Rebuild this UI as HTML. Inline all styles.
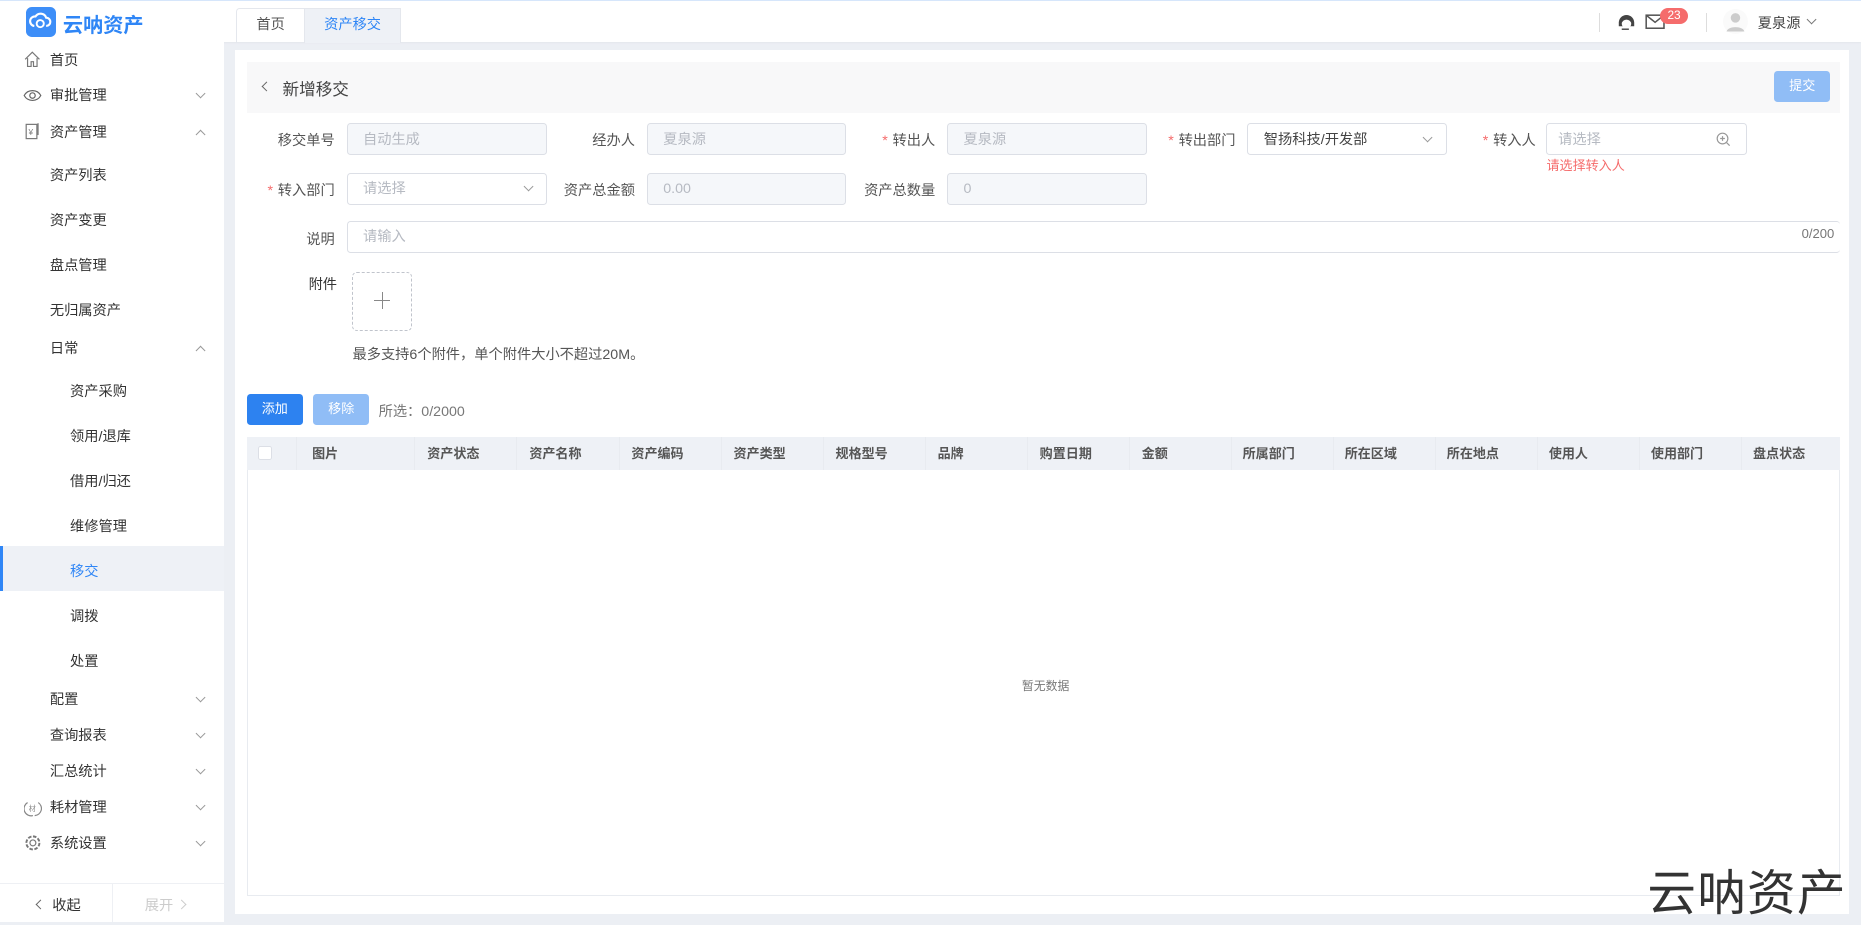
<!DOCTYPE html><html><head><meta charset="utf-8"><style>
*{margin:0;padding:0;box-sizing:border-box}
html,body{width:1861px;height:922px;overflow:hidden;background:#eceff4}
body{font-family:"Liberation Sans","Noto Sans CJK SC",sans-serif;font-size:12px;color:#333}
#w{position:absolute;left:0;top:0;width:1568px;height:777px;zoom:1.18686;background:#eceff4}
.a{position:absolute}
.hd{left:0;top:0;width:1568px;height:35px;background:#fff;border-top:1px solid #d6e6fb;box-shadow:0 1px 2px rgba(0,0,0,.05)}
.sb{left:0;top:35px;width:189px;height:742px;background:#fff}
.mi{position:absolute;left:42px;font-size:12px;color:#333;margin-top:-3px}
.ch{position:absolute;left:166px;width:6px;height:6px;border-right:1px solid #999;border-bottom:1px solid #999;transform:rotate(45deg);margin-top:1px}
.cu{transform:rotate(-135deg)}
.lb{position:absolute;font-size:12px;color:#555;text-align:right;width:90px;margin-top:-1px}
.lb b{color:#f56c6c;font-weight:normal;margin-right:4px}
.in{position:absolute;height:27px;border:1px solid #dcdfe6;border-radius:3px;background:#f5f7fa;color:#b6bac2;font-size:12px;padding:6px 13px;line-height:14px}
.wh{background:#fff}
.th{position:absolute;top:368px;height:28px;line-height:28px;font-size:11px;color:#555;font-weight:bold;border-right:1px solid #e8ebf0}
</style></head><body><div id="w">
<div class="a hd">
 <div class="a" style="left:22px;top:5px;width:25px;height:25px;background:#3d8ef8;border-radius:5px">
  <svg width="25" height="25" viewBox="0 0 25 25"><path d="M7 16a4 4 0 0 1 1-8 5 5 0 0 1 9 1 3.5 3.5 0 0 1 0 7" fill="none" stroke="#fff" stroke-width="1.8"/><circle cx="12" cy="14" r="3" fill="none" stroke="#fff" stroke-width="1.6"/></svg>
 </div>
 <div class="a" style="left:53px;top:7px;font-size:17px;font-weight:bold;color:#2f86f6">云呐资产</div>
 <div class="a" style="left:199px;top:6px;width:58px;height:29px;border:1px solid #e4e7ed;border-bottom:none;border-radius:3px 0 0 0;text-align:center;line-height:28px;color:#555">首页</div>
 <div class="a" style="left:257px;top:6px;width:81px;height:29px;background:#eef1f6;border:1px solid #e4e7ed;border-left:none;border-bottom:none;text-align:center;line-height:28px;color:#2f86f6">资产移交</div>
 <div class="a" style="left:1347px;top:10px;width:1px;height:16px;background:#ddd"></div>
 <svg class="a" style="left:1362px;top:9px" width="16" height="17" viewBox="0 0 16 17"><path d="M1.5 9a6.5 6.5 0 0 1 13 0v3h-13z" fill="#444"/><ellipse cx="8" cy="10" rx="4" ry="3.6" fill="#fff"/><path d="M4 14.5h6" stroke="#444" stroke-width="1.2"/></svg>
 <svg class="a" style="left:1386px;top:11px" width="18" height="13" viewBox="0 0 18 13"><rect x="1" y="1" width="15" height="11" fill="none" stroke="#555" stroke-width="1.3"/><path d="M1 1l7.5 6 7.5-6" fill="none" stroke="#555" stroke-width="1.3"/></svg>
 <div class="a" style="left:1399px;top:6px;width:23px;height:13px;border-radius:7px;background:#f56c6c;color:#fff;font-size:10px;text-align:center;line-height:13px">23</div>
 <div class="a" style="left:1437px;top:10px;width:1px;height:16px;background:#ddd"></div>
 <svg class="a" style="left:1452px;top:7px" width="21" height="21" viewBox="0 0 21 21"><circle cx="10.5" cy="10.5" r="10.5" fill="#fafafa"/><circle cx="10.5" cy="7.5" r="4" fill="#ccc"/><path d="M3 19c1-5 14-5 15 0z" fill="#ccc"/></svg>
 <div class="a" style="left:1481px;top:9px;font-size:12px;color:#444">夏泉源</div>
 <div class="a" style="left:1523px;top:13px;width:6px;height:6px;border-right:1px solid #777;border-bottom:1px solid #777;transform:rotate(45deg)"></div>
</div>
<div class="a sb">
 <svg class="a" style="left:20px;top:8px" width="14" height="14" viewBox="0 0 14 14"><path d="M1 7L7 1l6 6M3 6v7h3V9h2v4h3V6" fill="none" stroke="#777"/></svg>
 <div class="mi" style="top:9px">首页</div>
 <svg class="a" style="left:19px;top:40px" width="16" height="11" viewBox="0 0 16 11"><path d="M1 5.5C4 0 12 0 15 5.5 12 11 4 11 1 5.5z" fill="none" stroke="#666"/><circle cx="8" cy="5.5" r="2.3" fill="none" stroke="#666"/></svg>
 <div class="mi" style="top:39px">审批管理</div><div class="ch" style="top:40px"></div>
 <svg class="a" style="left:21px;top:68px" width="13" height="15" viewBox="0 0 13 15"><rect x="1" y="2" width="9" height="12" fill="none" stroke="#777"/><path d="M11 1v10" stroke="#777"/><text x="3" y="11" font-size="7" fill="#777">¥</text></svg>
 <div class="mi" style="top:70px">资产管理</div><div class="ch cu" style="top:74px"></div>
 <div class="mi" style="top:106px">资产列表</div>
 <div class="mi" style="top:144px">资产变更</div>
 <div class="mi" style="top:182px">盘点管理</div>
 <div class="mi" style="top:220px">无归属资产</div>
 <div class="mi" style="top:252px">日常</div><div class="ch cu" style="top:256px"></div>
 <div class="mi" style="left:59px;top:288px">资产采购</div>
 <div class="mi" style="left:59px;top:326px">领用/退库</div>
 <div class="mi" style="left:59px;top:364px">借用/归还</div>
 <div class="mi" style="left:59px;top:402px">维修管理</div>
 <div class="a" style="left:0;top:425px;width:189px;height:38px;background:#eef1f6;border-left:3px solid #2f86f6"></div>
 <div class="mi" style="left:59px;top:440px;color:#2f86f6">移交</div>
 <div class="mi" style="left:59px;top:478px">调拨</div>
 <div class="mi" style="left:59px;top:516px">处置</div>
 <div class="mi" style="top:548px">配置</div><div class="ch" style="top:549px"></div>
 <div class="mi" style="top:578px">查询报表</div><div class="ch" style="top:579px"></div>
 <div class="mi" style="top:608px">汇总统计</div><div class="ch" style="top:609px"></div>
 <svg class="a" style="left:20px;top:638px" width="15" height="15" viewBox="0 0 15 15"><path d="M3 3a6 6 0 0 0 4.5 11M12 3a6 6 0 0 1-3 11" fill="none" stroke="#888"/><text x="4" y="10" font-size="6" fill="#888">材</text></svg>
 <div class="mi" style="top:639px">耗材管理</div><div class="ch" style="top:640px"></div>
 <svg class="a" style="left:20px;top:668px" width="15" height="15" viewBox="0 0 15 15"><circle cx="7.5" cy="7.5" r="5.5" fill="none" stroke="#777" stroke-dasharray="3 1.3" stroke-width="1.6"/><circle cx="7.5" cy="7.5" r="2.5" fill="none" stroke="#777"/></svg>
 <div class="mi" style="top:669px">系统设置</div><div class="ch" style="top:670px"></div>
 <div class="a" style="left:0;top:709px;width:189px;height:1px;background:#eef0f4"></div>
 <div class="a" style="left:94px;top:710px;width:1px;height:32px;background:#eef0f4"></div>
 <div class="a" style="left:31px;top:724px;width:6px;height:6px;border-left:1px solid #666;border-bottom:1px solid #666;transform:rotate(45deg)"></div>
 <div class="mi" style="left:44px;top:721px">收起</div>
 <div class="mi" style="left:122px;top:721px;color:#ccc">展开</div>
 <div class="a" style="left:150px;top:724px;width:6px;height:6px;border-right:1px solid #ccc;border-top:1px solid #ccc;transform:rotate(45deg)"></div>
</div>
<div class="a" style="left:198px;top:42px;width:1360px;height:728px;background:#fff"></div>
<div class="a" style="left:208px;top:52px;width:1342px;height:43px;background:#f8f8f9"></div>
<div class="a" style="left:222px;top:70px;width:6px;height:6px;border-left:1px solid #666;border-bottom:1px solid #666;transform:rotate(45deg)"></div>
<div class="a" style="left:238px;top:64px;font-size:14px;color:#444">新增移交</div>
<div class="a" style="left:1495px;top:60px;width:47px;height:26px;background:#90bdf6;border-radius:3px;color:#fff;text-align:center;line-height:26px;font-size:11px">提交</div>

<div class="lb" style="left:192px;top:110px">移交单号</div><div class="in" style="left:292px;top:104px;width:169px">自动生成</div>
<div class="lb" style="left:445px;top:110px">经办人</div><div class="in" style="left:545px;top:104px;width:168px">夏泉源</div>
<div class="lb" style="left:698px;top:110px"><b>*</b>转出人</div><div class="in" style="left:798px;top:104px;width:168px">夏泉源</div>
<div class="lb" style="left:951px;top:110px"><b>*</b>转出部门</div><div class="in wh" style="left:1051px;top:104px;width:168px;color:#444">智扬科技/开发部</div>
<div class="a" style="left:1200px;top:113px;width:6px;height:6px;border-right:1px solid #999;border-bottom:1px solid #999;transform:rotate(45deg)"></div>
<div class="lb" style="left:1204px;top:110px"><b>*</b>转入人</div><div class="in wh" style="left:1303px;top:104px;width:169px;padding-left:9px">请选择</div>
<svg class="a" style="left:1446px;top:111px" width="12" height="12" viewBox="0 0 12 12"><circle cx="5.5" cy="5.5" r="4.5" fill="none" stroke="#999"/><path d="M9 9l2.5 2.5M5.5 3.5v4M3.5 5.5h4" stroke="#999"/></svg>
<div class="a" style="left:1303px;top:131px;font-size:11px;color:#f56c6c">请选择转入人</div>

<div class="lb" style="left:192px;top:152px"><b>*</b>转入部门</div><div class="in wh" style="left:292px;top:146px;width:169px">请选择</div>
<div class="a" style="left:442px;top:154px;width:6px;height:6px;border-right:1px solid #999;border-bottom:1px solid #999;transform:rotate(45deg)"></div>
<div class="lb" style="left:445px;top:152px">资产总金额</div><div class="in" style="left:545px;top:146px;width:168px">0.00</div>
<div class="lb" style="left:698px;top:152px">资产总数量</div><div class="in" style="left:798px;top:146px;width:168px">0</div>

<div class="lb" style="left:192px;top:193px">说明</div><div class="in wh" style="left:292px;top:186px;width:1258px;border-right:none">请输入</div>
<div class="a" style="left:1518px;top:190px;font-size:11px;color:#777">0/200</div>

<div class="a" style="left:260px;top:230px;color:#333">附件</div>
<div class="a" style="left:297px;top:229px;width:50px;height:50px;border:1px dashed #c0c4cc;border-radius:4px"></div>
<div class="a" style="left:315px;top:253px;width:14px;height:1px;background:#888"></div>
<div class="a" style="left:322px;top:246px;width:1px;height:14px;background:#888"></div>
<div class="a" style="left:297px;top:289px;color:#555">最多支持6个附件，单个附件大小不超过20M。</div>

<div class="a" style="left:208px;top:332px;width:47px;height:26px;background:#2d82f0;border-radius:3px;color:#fff;text-align:center;line-height:26px;font-size:11px">添加</div>
<div class="a" style="left:264px;top:332px;width:47px;height:26px;background:#90bdf6;border-radius:3px;color:#fff;text-align:center;line-height:26px;font-size:11px">移除</div>
<div class="a" style="left:319px;top:337px;color:#777">所选：0/2000</div>

<div class="a" style="left:208px;top:368px;width:1342px;height:387px;border:1px solid #e8ebf0"></div>
<div class="a" style="left:208px;top:368px;width:1342px;height:28px;background:#eef1f6"></div>
<div class="a" style="left:217px;top:376px;width:12px;height:12px;border:1px solid #dcdfe6;background:#fff;border-radius:2px"></div>
<div class="th" style="left:208px;width:42px"></div>
<div class="th" style="left:250px;width:100px;padding-left:13px">图片</div>
<div class="th" style="left:350px;width:86px;padding-left:10px">资产状态</div>
<div class="th" style="left:436px;width:86px;padding-left:10px">资产名称</div>
<div class="th" style="left:522px;width:86px;padding-left:10px">资产编码</div>
<div class="th" style="left:608px;width:86px;padding-left:10px">资产类型</div>
<div class="th" style="left:694px;width:86px;padding-left:10px">规格型号</div>
<div class="th" style="left:780px;width:86px;padding-left:10px">品牌</div>
<div class="th" style="left:866px;width:86px;padding-left:10px">购置日期</div>
<div class="th" style="left:952px;width:86px;padding-left:10px">金额</div>
<div class="th" style="left:1038px;width:86px;padding-left:9px">所属部门</div>
<div class="th" style="left:1124px;width:86px;padding-left:9px">所在区域</div>
<div class="th" style="left:1210px;width:86px;padding-left:9px">所在地点</div>
<div class="th" style="left:1296px;width:86px;padding-left:9px">使用人</div>
<div class="th" style="left:1382px;width:86px;padding-left:9px">使用部门</div>
<div class="th" style="left:1468px;width:82px;padding-left:9px;border:none">盘点状态</div>
<div class="a" style="left:861px;top:570px;font-size:10px;color:#777">暂无数据</div>
<div class="a" style="left:1388px;top:720px;font-size:41px;color:#333;letter-spacing:1px">云呐资产</div>
</div></body></html>
